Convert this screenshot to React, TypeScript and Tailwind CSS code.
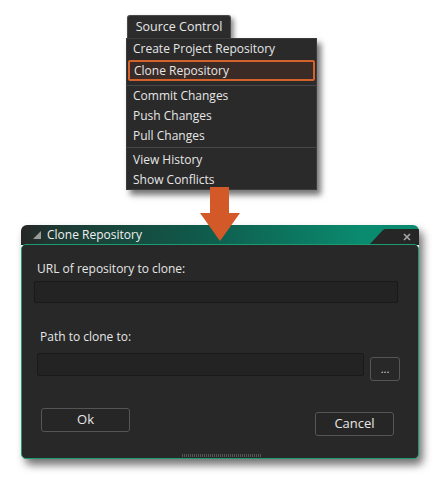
import React from 'react';

const menuGroups: string[][] = [
  ['Create Project Repository', 'Clone Repository'],
  ['Commit Changes', 'Push Changes', 'Pull Changes'],
  ['View History', 'Show Conflicts'],
];

const SourceControlMenu: React.FC = () => (
  <div className="ml-[126px] pt-[15px] w-[191px]">
    <div className="ml-px w-[104px] h-[23px] bg-[#2c2c2c] border border-[#4a4a4a] border-b-0 rounded-t-[3px] flex items-center justify-center text-[12.5px] text-[#e8e8e8] shadow-[3px_3px_5px_rgba(0,0,0,0.45)]">
      Source Control
    </div>
    <div className="w-[191px] h-[152px] bg-[#2a2a2a] border border-[#3c3c3c] shadow-[4px_5px_6px_rgba(0,0,0,0.55)] flex flex-col">
      {menuGroups.map((group, gi) => (
        <div
          key={gi}
          className={
            gi === 0 ? 'pb-[3px]' : gi === 1 ? 'border-t border-[#474747] pb-[1px]' : 'border-t border-[#474747] pt-[2px]'
          }
        >
          {group.map((item) => {
            const active = item === 'Clone Repository';
            return (
              <div
                key={item}
                className={
                  active
                    ? 'h-[21px] mx-[1px] my-[1px] flex items-center px-[4px] text-[12px] text-[#e6e6e6] bg-[#3a2b27] border-2 border-[#d5622c] rounded-[2px]'
                    : 'h-[20px] flex items-center px-[6px] text-[12px] text-[#e6e6e6]'
                }
              >
                {item}
              </div>
            );
          })}
        </div>
      ))}
    </div>
  </div>
);

const Arrow: React.FC = () => (
  <svg className="absolute left-[199px] top-[187px]" width="42" height="55" viewBox="0 0 42 55">
    <path d="M11 0 H30 V26 H41 L21 54 L1 26 H11 Z" fill="#d35a28" />
  </svg>
);

const CloneDialog: React.FC = () => (
  <div className="ml-[21px] mt-[35px] w-[398px] h-[234px] flex flex-col rounded-[6px] shadow-[4px_6px_8px_rgba(0,0,0,0.55)]">
    <div className="h-[20px] flex rounded-t-[6px] overflow-hidden bg-[linear-gradient(90deg,#262626_0%,#1e3a33_10%,#0f5a4b_45%,#0a8a6e_85%)]">
      <div className="flex-1 flex items-center pl-[12px] gap-[6px]">
        <svg width="8" height="8" viewBox="0 0 8 8">
          <path d="M8 0 V8 H0 Z" fill="#9a9a9a" />
        </svg>
        <span className="text-[12px] text-[#f0f0f0] leading-none">Clone Repository</span>
      </div>
      <div className="w-[50px] h-[20px] relative">
        <svg className="absolute inset-0" width="50" height="20" viewBox="0 0 50 20">
          <path d="M0 20 L14 5 Q15 4 17 4 H50 V20 Z" fill="#262626" />
        </svg>
        <svg className="absolute right-[8px] top-[8px]" width="8" height="8" viewBox="0 0 8 8">
          <path d="M1 1 L7 7 M7 1 L1 7" stroke="#a8a8a8" strokeWidth="1.6" />
        </svg>
      </div>
    </div>
    <div className="flex-1 bg-[#282828] border border-[#1d9a70] rounded-[5px] -mt-[1px] flex flex-col relative">
      <div className="pl-[15px] pt-[18px] text-[12px] text-[#e6e6e6] leading-none">URL of repository to clone:</div>
      <div className="ml-[12px] mt-[6px] w-[364px] h-[22px] bg-[#232323] border border-[#1a1a1a] rounded-[2px]" />
      <div className="pl-[18px] mt-[28px] text-[12px] text-[#e6e6e6] leading-none">Path to clone to:</div>
      <div className="flex items-start mt-[10px] ml-[15px] gap-[6px]">
        <div className="w-[327px] h-[23px] bg-[#232323] border border-[#1a1a1a] rounded-[2px]" />
        <div className="mt-[4px] w-[30px] h-[24px] border border-[#555] rounded-[3px] bg-[#282828] flex items-center justify-center text-[11px] text-[#ddd]">
          ...
        </div>
      </div>
      <div className="flex items-start justify-between mt-[27px] pl-[19px] pr-[24px]">
        <div className="w-[89px] h-[24px] border border-[#555] rounded-[3px] bg-[#262626] flex items-center justify-center text-[13px] text-[#e6e6e6]">
          Ok
        </div>
        <div className="mt-[4px] w-[79px] h-[24px] border border-[#555] rounded-[3px] bg-[#262626] flex items-center justify-center text-[13px] text-[#e6e6e6]">
          Cancel
        </div>
      </div>
      <div className="absolute bottom-[1px] left-[160px] w-[80px] h-[3px] bg-[repeating-linear-gradient(90deg,#555_0px,#555_1px,transparent_1px,transparent_2px)]" />
    </div>
  </div>
);

export default function App() {
  return (
    <div className="relative w-[440px] h-[478px] bg-white overflow-hidden font-['Open_Sans','Noto_Sans',sans-serif]">
      <SourceControlMenu />
      <CloneDialog />
      <Arrow />
    </div>
  );
}
